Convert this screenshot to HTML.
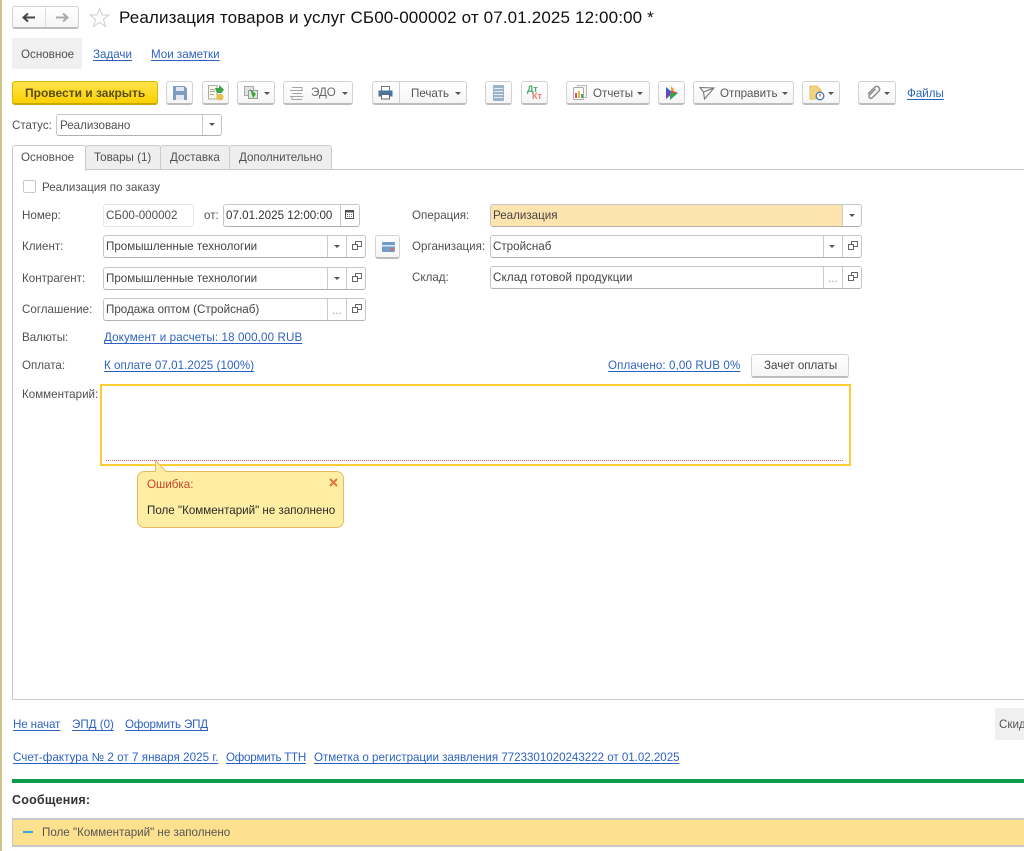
<!DOCTYPE html>
<html lang="ru"><head><meta charset="utf-8"><title>Реализация</title>
<style>
html,body{margin:0;padding:0;background:#fff}
body{width:1024px;height:851px;overflow:hidden;position:relative;font-family:"Liberation Sans",Arial,sans-serif;font-size:11.6px;color:#505050}
#w{position:absolute;left:0;top:0;width:1024px;height:851px;overflow:hidden;background:#fff;filter:blur(.35px)}
.a{position:absolute;box-sizing:border-box}
.t{position:absolute;white-space:nowrap;line-height:14px;margin-top:1px}
.l{color:#2f62c0;text-decoration:underline;text-underline-offset:2px;text-decoration-thickness:1px}
.btn{position:absolute;box-sizing:border-box;height:23px;border:1px solid #d2d2d2;border-bottom:2px solid #bdbdbd;border-radius:3px;background:linear-gradient(#fff,#f5f5f5)}
.f{position:absolute;box-sizing:border-box;height:23px;border:1px solid #c6c6c6;border-bottom-color:#b0b0b0;border-radius:3px;background:#fff}
.d{position:absolute;top:0;bottom:0;width:1px;background:#cbcbcb}
.tri{position:absolute;width:0;height:0;border-left:3px solid transparent;border-right:3px solid transparent;border-top:3px solid #555}
svg{position:absolute;display:block}
.tab{position:absolute;box-sizing:border-box;top:145px;height:25px;border:1px solid #cbcbcb;border-radius:3px 3px 0 0;background:#eee;line-height:24px;padding-left:8px;white-space:nowrap}
</style></head><body><div id="w">
<div class="a" style="left:0;top:0;width:2px;height:851px;background:#cfc58a"></div>

<!-- nav -->
<div class="btn" style="left:12px;top:6px;width:67px;height:23px"></div>
<div class="a" style="left:45px;top:7px;width:1px;height:20px;background:#dedede"></div>
<svg style="left:22px;top:12px" width="14" height="11"><path d="M1 5.500H13M6 1.500L1.500 5.500L6 9.500" fill="none" stroke="#444" stroke-width="2"/></svg>
<svg style="left:55px;top:12px" width="14" height="11"><path d="M1 5.500H13M8 1.500L12.500 5.500L8 9.500" fill="none" stroke="#aaa" stroke-width="2"/></svg>
<svg style="left:89px;top:7px" width="21" height="21"><path d="M10.500 1.500L13 8H20L14.500 12.300L16.500 19.500L10.500 15.300L4.500 19.500L6.500 12.300L1 8H8Z" fill="#fff" stroke="#cfcfcf"/></svg>
<div class="t" style="left:119px;top:7px;font-size:17px;line-height:19px;color:#111;letter-spacing:.14px">Реализация товаров и услуг СБ00-000002 от 07.01.2025 12:00:00 *</div>

<!-- section tabs -->
<div class="a" style="left:12px;top:38px;width:70px;height:31px;background:#f0f0f0;border-radius:2px"></div>
<div class="t" style="left:21px;top:47px">Основное</div>
<div class="t l" style="left:93px;top:47px">Задачи</div>
<div class="t l" style="left:151px;top:47px">Мои заметки</div>

<!-- toolbar -->
<div class="a" style="left:12px;top:81px;width:146px;height:24px;border:1px solid #d9b400;border-bottom:2px solid #cba800;border-radius:3px;background:linear-gradient(#ffe34d,#fbd000)"></div>
<div class="t" style="left:25px;top:85px;font-weight:bold;color:#5c4d10;font-size:12px">Провести и закрыть</div>

<div class="btn" style="left:166px;top:81px;width:27px;height:24px"></div>
<svg style="left:173px;top:86px" width="14" height="14"><path d="M0 0H11.500L14 2.500V14H0Z" fill="#7e9cc2"/><rect x="3" y="1" width="8" height="4" fill="#dfe7f0"/><rect x="3" y="9" width="8" height="5" fill="#e4e8ee"/></svg>

<div class="btn" style="left:202px;top:81px;width:27px;height:24px"></div>
<svg style="left:207px;top:84px" width="18" height="18"><path d="M1.500 1.500H10V15H1.500Z" fill="#fdf8e8" stroke="#aaa"/><path d="M3 5.500H8M3 7.500H8M3 10.500H7" stroke="#aaa"/><path d="M8 4H12V1L17 5.500L14.500 9H10Z" fill="#3aa648"/><ellipse cx="13" cy="13" rx="3.600" ry="3.400" fill="#e9c24c"/></svg>

<div class="btn" style="left:237px;top:81px;width:38px;height:24px"></div>
<svg style="left:243px;top:85px" width="18" height="16"><rect x="1.500" y="1.500" width="9" height="9" fill="#e3e3e3" stroke="#aaa"/><rect x="5.500" y="5.500" width="9" height="8" fill="#dfeadf" stroke="#999"/><path d="M7 4L13 9L10 13Z" fill="#3fa03f"/></svg>
<div class="tri" style="left:264px;top:92px"></div>

<div class="btn" style="left:283px;top:81px;width:70px;height:24px"></div>
<svg style="left:289px;top:86px" width="15" height="14"><path d="M3 1.500H13V4.500M1 4.500H14M3 7.500H13M1 10.500H14M3 10.500V13.500H13" stroke="#a5a5a5" fill="none"/></svg>
<div class="t" style="left:311px;top:85px;color:#666">ЭДО</div>
<div class="tri" style="left:342px;top:92px"></div>

<div class="btn" style="left:372px;top:81px;width:95px;height:24px"></div>
<div class="a" style="left:399px;top:82px;width:1px;height:21px;background:#d2d2d2"></div>
<svg style="left:378px;top:85px" width="15" height="15"><rect x="3.500" y="1.500" width="8" height="5" fill="#fff" stroke="#777"/><path d="M0.500 5.500H14.500V11.500H0.500Z" fill="#47769f"/><rect x="3.500" y="9.500" width="8" height="4.500" fill="#fff" stroke="#667"/></svg>
<div class="t" style="left:411px;top:86px;color:#555">Печать</div>
<div class="tri" style="left:455px;top:92px"></div>

<div class="btn" style="left:485px;top:81px;width:27px;height:24px"></div>
<svg style="left:493px;top:85px" width="11" height="16"><rect x="0" y="0" width="11" height="16" rx="1" fill="#9bb3c9"/><path d="M1 3.500H10M1 6.500H10M1 9.500H10M1 12.500H10" stroke="#e3eaf0"/></svg>

<div class="btn" style="left:521px;top:81px;width:27px;height:24px"></div>
<div class="t" style="left:527px;top:84px;font-size:9px;font-weight:bold;color:#4aad6e;line-height:9px">Дт</div>
<div class="t" style="left:532px;top:91px;font-size:9px;font-weight:bold;color:#ee7b75;line-height:9px">Кт</div>

<div class="btn" style="left:566px;top:81px;width:84px;height:24px"></div>
<svg style="left:572px;top:84px" width="16" height="17"><rect x="5.500" y="1.500" width="9" height="12" fill="#f4f4f4" stroke="#bbb"/><rect x="1.500" y="3.500" width="10" height="12" rx="1" fill="#fff" stroke="#aaa"/><rect x="3" y="9" width="2" height="5" fill="#d9534f"/><rect x="6" y="7" width="2" height="7" fill="#e8b53c"/><rect x="9" y="10" width="2" height="4" fill="#4aa564"/></svg>
<div class="t" style="left:593px;top:86px;color:#555">Отчеты</div>
<div class="tri" style="left:637px;top:92px"></div>

<div class="btn" style="left:658px;top:81px;width:27px;height:24px"></div>
<svg style="left:665px;top:85px" width="14" height="16"><path d="M1 2L8 8L1 8Z" fill="#3b5fc4"/><path d="M1 8L8 8L1 14Z" fill="#7a3fb5"/><path d="M6 5L13 8L6 8Z" fill="#e5483a"/><path d="M6 1L9.500 5L6 6Z" fill="#f59a23"/><path d="M5 8H13L5 15Z" fill="#2aa84f"/></svg>

<div class="btn" style="left:693px;top:81px;width:101px;height:24px"></div>
<svg style="left:699px;top:86px" width="16" height="14"><path d="M1 1.500L15 2L5.500 13L4.500 6Z M4.500 6L15 2" fill="none" stroke="#777" stroke-width="1.100"/></svg>
<div class="t" style="left:720px;top:86px;color:#555">Отправить</div>
<div class="tri" style="left:782px;top:92px"></div>

<div class="btn" style="left:802px;top:81px;width:38px;height:24px"></div>
<svg style="left:809px;top:85px" width="16" height="16"><path d="M1 1H8L12 5V14H1Z" fill="#f1d27e" stroke="#e3c26a"/><circle cx="11" cy="11" r="3.800" fill="#fff" stroke="#4a7bb8" stroke-width="1.400"/><path d="M11 9V11.500" stroke="#d9534f" stroke-width="1.400"/></svg>
<div class="tri" style="left:828px;top:92px"></div>

<div class="btn" style="left:858px;top:81px;width:38px;height:24px"></div>
<svg style="left:866px;top:85px" width="15" height="15"><path d="M9.500 4L3.500 10C2 12 4.500 14.500 6.500 12.500L13 6C15 3.500 11.500 0 9 2L2 9" fill="none" stroke="#8a8a8a" stroke-width="1.500"/></svg>
<div class="tri" style="left:884px;top:92px"></div>
<div class="t l" style="left:907px;top:86px">Файлы</div>

<!-- status -->
<div class="t" style="left:12px;top:118px">Статус:</div>
<div class="f" style="left:56px;top:114px;width:166px;height:22px"><div class="d" style="left:145px"></div><div class="tri" style="left:152px;top:8px"></div></div>
<div class="t" style="left:60px;top:118px">Реализовано</div>

<!-- tab panel -->
<div class="a" style="left:12px;top:169px;width:1020px;height:531px;border:1px solid #c9c9c9"></div>
<div class="tab" style="left:85px;width:76px">Товары (1)</div>
<div class="tab" style="left:160px;width:70px;padding-left:9px">Доставка</div>
<div class="tab" style="left:229px;width:103px;padding-left:9px">Дополнительно</div>
<div class="tab" style="left:12px;width:74px;height:26px;background:#fff;border-bottom:0;z-index:2">Основное</div>

<div class="a" style="left:23px;top:180px;width:13px;height:13px;border:1px solid #c8c8c8;border-radius:2px"></div>
<div class="t" style="left:42px;top:180px">Реализация по заказу</div>

<div class="t" style="left:22px;top:208px">Номер:</div>
<div class="a" style="left:103px;top:204px;width:91px;height:23px;border:1px solid #e6e6e6;border-radius:3px"></div>
<div class="t" style="left:106px;top:208px">СБ00-000002</div>
<div class="t" style="left:204px;top:208px">от:</div>
<div class="f" style="left:223px;top:204px;width:137px"><div class="d" style="left:116px"></div></div>
<div class="t" style="left:226px;top:208px;color:#333">07.01.2025 12:00:00</div>
<svg style="left:345px;top:209px" width="10" height="11"><rect x=".5" y="1.500" width="8" height="8" fill="none" stroke="#555"/><rect x="1" y="1.500" width="7" height="2" fill="#555"/><path d="M2 5.500H7M2 7.500H7" stroke="#777" stroke-dasharray="1 1"/></svg>

<div class="t" style="left:22px;top:239px">Клиент:</div>
<div class="f" style="left:103px;top:235px;width:263px"><div class="d" style="left:223px"></div><div class="d" style="left:242px"></div><div class="tri" style="left:230px;top:9px"></div></div>
<div class="t" style="left:106px;top:239px;color:#444">Промышленные технологии</div>
<svg style="left:352px;top:241px" width="10" height="10"><rect x="3.500" y=".5" width="6" height="5" fill="#fff" stroke="#666"/><rect x=".5" y="3.500" width="5" height="5" fill="#fff" stroke="#666"/></svg>
<div class="btn" style="left:375px;top:235px;width:25px;height:24px"></div>
<svg style="left:382px;top:242px" width="13" height="10"><rect width="13" height="10" rx="1" fill="#6f9cc9"/><rect y="3" width="13" height="1.500" fill="#dbe8f3"/><circle cx="10" cy="7.500" r="1.500" fill="#e8613c"/></svg>

<div class="t" style="left:22px;top:271px">Контрагент:</div>
<div class="f" style="left:103px;top:267px;width:263px"><div class="d" style="left:223px"></div><div class="d" style="left:242px"></div><div class="tri" style="left:230px;top:9px"></div></div>
<div class="t" style="left:106px;top:271px;color:#444">Промышленные технологии</div>
<svg style="left:352px;top:273px" width="10" height="10"><rect x="3.500" y=".5" width="6" height="5" fill="#fff" stroke="#666"/><rect x=".5" y="3.500" width="5" height="5" fill="#fff" stroke="#666"/></svg>

<div class="t" style="left:22px;top:302px">Соглашение:</div>
<div class="f" style="left:103px;top:298px;width:263px"><div class="d" style="left:223px"></div><div class="d" style="left:242px"></div></div>
<div class="t" style="left:106px;top:302px;color:#444">Продажа оптом (Стройснаб)</div>
<div class="t" style="left:332px;top:303px;color:#999">...</div>
<svg style="left:352px;top:304px" width="10" height="10"><rect x="3.500" y=".5" width="6" height="5" fill="#fff" stroke="#666"/><rect x=".5" y="3.500" width="5" height="5" fill="#fff" stroke="#666"/></svg>

<div class="t" style="left:22px;top:330px">Валюты:</div>
<div class="t l" style="left:104px;top:330px;letter-spacing:.12px">Документ и расчеты: 18 000,00 RUB</div>
<div class="t" style="left:22px;top:358px">Оплата:</div>
<div class="t l" style="left:104px;top:358px;letter-spacing:.04px">К оплате 07.01.2025 (100%)</div>

<div class="t" style="left:412px;top:208px">Операция:</div>
<div class="f" style="left:490px;top:204px;width:372px"><div class="a" style="left:0;top:0;width:351px;height:21px;background:#fde3ad;border-radius:2px 0 0 2px"></div><div class="d" style="left:351px"></div><div class="tri" style="left:358px;top:9px"></div></div>
<div class="t" style="left:493px;top:208px;color:#444">Реализация</div>

<div class="t" style="left:412px;top:239px">Организация:</div>
<div class="f" style="left:490px;top:235px;width:372px"><div class="d" style="left:332px"></div><div class="d" style="left:351px"></div><div class="tri" style="left:338px;top:9px"></div></div>
<div class="t" style="left:493px;top:239px;color:#444">Стройснаб</div>
<svg style="left:848px;top:241px" width="10" height="10"><rect x="3.500" y=".5" width="6" height="5" fill="#fff" stroke="#666"/><rect x=".5" y="3.500" width="5" height="5" fill="#fff" stroke="#666"/></svg>

<div class="t" style="left:412px;top:270px">Склад:</div>
<div class="f" style="left:490px;top:266px;width:372px"><div class="d" style="left:332px"></div><div class="d" style="left:351px"></div></div>
<div class="t" style="left:493px;top:270px;color:#444;letter-spacing:.12px">Склад готовой продукции</div>
<div class="t" style="left:828px;top:271px;color:#999">...</div>
<svg style="left:848px;top:272px" width="10" height="10"><rect x="3.500" y=".5" width="6" height="5" fill="#fff" stroke="#666"/><rect x=".5" y="3.500" width="5" height="5" fill="#fff" stroke="#666"/></svg>

<div class="t l" style="left:608px;top:358px;letter-spacing:.1px">Оплачено: 0,00 RUB 0%</div>
<div class="btn" style="left:751px;top:354px;width:98px;height:24px"></div>
<div class="t" style="left:764px;top:358px;color:#444">Зачет оплаты</div>

<!-- comment -->
<div class="t" style="left:22px;top:387px">Комментарий:</div>
<div class="a" style="left:100px;top:384px;width:751px;height:82px;border:2px solid #fbcc34"></div>
<div class="a" style="left:106px;top:460px;width:737px;height:1px;border-top:1px dotted #e85b5b"></div>

<!-- tooltip -->
<svg style="left:136px;top:459px;z-index:3" width="210" height="71"><path d="M7.500 12.500H19.500V1.500L30 12.500H200A7 7 0 0 1 207.500 19.500V61A7 7 0 0 1 200 68.500H8A7 7 0 0 1 1.500 61V19.500A7 7 0 0 1 7.500 12.500Z" fill="#fdeea3" stroke="#eab965"/></svg>
<div class="t" style="left:147px;top:477px;color:#c8452a;z-index:4">Ошибка:</div>
<svg style="left:329px;top:478px;z-index:4" width="9" height="9"><path d="M1 1L8 8M8 1L1 8" stroke="#e07a42" stroke-width="2"/></svg>
<div class="t" style="left:147px;top:503px;color:#2a2a2a;z-index:4">Поле "Комментарий" не заполнено</div>

<!-- bottom -->
<div class="t l" style="left:13px;top:717px;letter-spacing:-.12px">Не начат</div>
<div class="t l" style="left:72px;top:717px">ЭПД (0)</div>
<div class="t l" style="left:125px;top:717px;letter-spacing:-.17px">Оформить ЭПД</div>
<div class="a" style="left:995px;top:708px;width:29px;height:32px;background:#f0f0f0"></div>
<div class="t" style="left:999px;top:717px;color:#555">Скид</div>
<div class="t l" style="left:13px;top:750px;letter-spacing:.05px">Счет-фактура № 2 от 7 января 2025 г.</div>
<div class="t l" style="left:226px;top:750px;letter-spacing:-.25px">Оформить ТТН</div>
<div class="t l" style="left:314px;top:750px;letter-spacing:-.03px">Отметка о регистрации заявления 7723301020243222 от 01.02.2025</div>
<div class="a" style="left:12px;top:779px;width:1012px;height:4px;background:#0c9a48"></div>
<div class="t" style="left:12px;top:792px;font-weight:bold;color:#333;font-size:12.500px;letter-spacing:.2px">Сообщения:</div>
<div class="a" style="left:12px;top:818px;width:1012px;height:29px;background:#fee18f;border-top:2px solid #c8c8c8;border-bottom:2px solid #c8c8c8;border-left:1px solid #c8c8c8"></div>
<div class="a" style="left:23px;top:831px;width:10px;height:2px;background:#35a7d6"></div>
<div class="t" style="left:42px;top:825px;color:#555">Поле "Комментарий" не заполнено</div>
</div></body></html>
